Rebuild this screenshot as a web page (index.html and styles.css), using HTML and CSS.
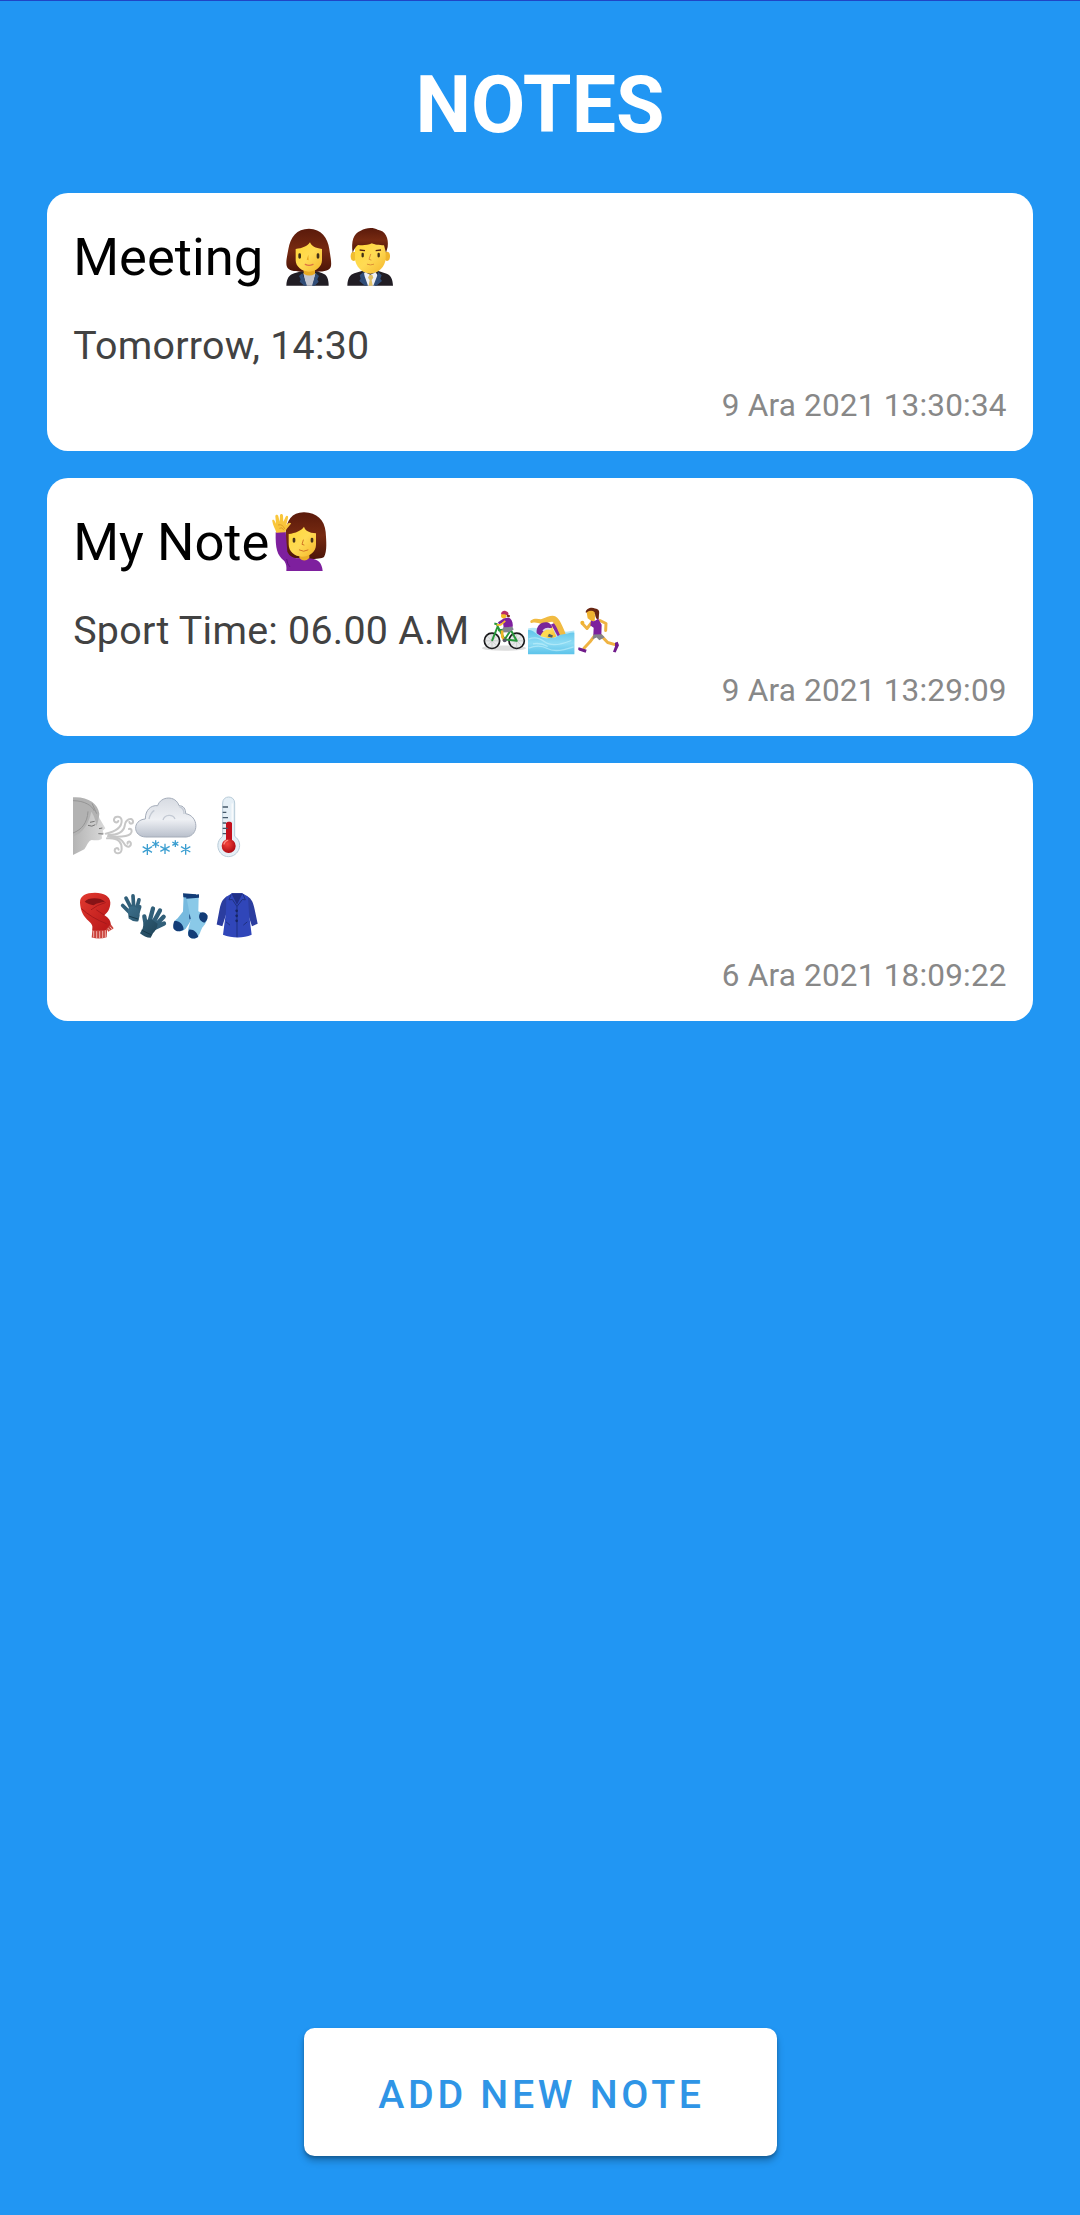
FILE: index.html
```html
<!DOCTYPE html>
<html lang="tr">
<head>
<meta charset="utf-8">
<title>Notes</title>
<link rel="stylesheet" href="styles.css">
</head>
<body>
<svg class="defs" aria-hidden="true">
  <defs>
    <linearGradient id="hair" x1="0" y1="0" x2="0" y2="1"><stop offset="0" stop-color="#5a1a0b"/><stop offset=".5" stop-color="#772a11"/><stop offset="1" stop-color="#4c1508"/></linearGradient>
    <linearGradient id="skin" x1="0" y1="0" x2="1" y2="1"><stop offset="0" stop-color="#ffd735"/><stop offset=".5" stop-color="#ffdb54"/><stop offset="1" stop-color="#f4b62c"/></linearGradient>
    <linearGradient id="cloud" x1="0" y1="0" x2="0" y2="1"><stop offset="0" stop-color="#d7dbe2"/><stop offset=".55" stop-color="#eef0f4"/><stop offset="1" stop-color="#b9c0cc"/></linearGradient>
    <linearGradient id="water" x1="0" y1="0" x2="0" y2="1"><stop offset="0" stop-color="#5fc4ea"/><stop offset=".55" stop-color="#8edcf4"/><stop offset="1" stop-color="#5cc3ea"/></linearGradient>
    <linearGradient id="red" x1="0" y1="0" x2="1" y2="1"><stop offset="0" stop-color="#e23a30"/><stop offset="1" stop-color="#b71618"/></linearGradient>
    <linearGradient id="glove" x1="0" y1="0" x2="1" y2="1"><stop offset="0" stop-color="#3c6f8b"/><stop offset="1" stop-color="#1f4357"/></linearGradient>
    <linearGradient id="grey" x1="0" y1="0" x2="1" y2="0"><stop offset="0" stop-color="#b4b4b4"/><stop offset="1" stop-color="#dadada"/></linearGradient>
    <radialGradient id="bulb" cx=".4" cy=".35" r=".7"><stop offset="0" stop-color="#f5443c"/><stop offset="1" stop-color="#a90710"/></radialGradient>
  </defs>
</svg>
<main class="screen">
  <h1 class="title">NOTES</h1>
  <section class="notes">
    <article class="note">
      <h2 class="note-title"><span>Meeting</span><span class="emojis spaced">
        <svg class="emoji" viewBox="23 11 186 230" role="img" aria-label="woman office worker">
          <path fill="#211d24" d="M48 211c1-21 8-33 24-37l21-6h47l16 6c14 4 19 18 19 37z"/>
          <path fill="url(#hair)" d="M116 40C79 40 60 66 54 102c-4 22-8 38-5 50 3 13 22 17 44 17h46c24 0 41-4 43-17 2-12-2-30-5-50C172 66 153 41 116 40z"/>
          <path fill="#c3c6d0" d="M99 174h37l-9 37h-20z"/>
          <path fill="#e9a921" d="M100 158h34v17q-17 11-34 0z"/>
          <path fill="url(#skin)" d="M76 101c21-2 34-8 43-20 4 11 16 18 36 20v34c0 19-18 34-39 34s-40-15-40-34z"/>
          <path fill="#304d78" d="M96 174l-10 8 5 10-3 7 14 12h8zM137 174l9 8-5 10 4 7-12 12h-8z"/>
          <path d="M88 118v8M143 118v8" stroke="#423017" stroke-width="8" stroke-linecap="round"/>
          <path fill="#e9a71d" d="M114 118l-5 15 6 2z"/>
          <path d="M105 147q11 6 23 0" fill="none" stroke="#dc7144" stroke-width="4" stroke-linecap="round"/>
        </svg>
        <svg class="emoji" viewBox="209 11 186 230" role="img" aria-label="man office worker">
          <path fill="#211d24" d="M231 211c1-21 7-33 21-37l25-8h45l27 9c14 5 18 18 19 36z"/>
          <ellipse cx="250" cy="123" rx="9" ry="14" fill="#f0bd31"/><ellipse cx="350" cy="123" rx="9" ry="14" fill="#efb52c"/>
          <path fill="url(#skin)" d="M254 82h92v46c0 26-23 47-46 47s-46-21-46-47z"/>
          <path fill="url(#hair)" d="M247 112c-5-34 2-58 24-66 17-11 40-10 51-3 23 3 34 25 30 52l-5 17-6-22c-14 0-30-2-36-6-15 6-27 7-42 5-8 6-11 13-16 23z"/>
          <path fill="#eef0f5" d="M284 171l16 7 16-7 8 12-10 28h-24l-15-29z"/>
          <path fill="#dfbf65" d="M297 179h9l3 8-5 7 3 17h-12l3-17-5-7z"/>
          <path fill="#304d78" d="M280 169l-12 11 3 10-4 7 17 14h9l-10-28zM323 169l11 11-4 10 5 7-17 14h-9l11-28z"/>
          <path d="M268 104l16 2M316 106l16-2" stroke="#592413" stroke-width="4"/>
          <path d="M277 116v7M325 116v7" stroke="#423017" stroke-width="7" stroke-linecap="round"/>
          <path d="M301 117l-5 15 6 2M291 147q9 4 19 0" fill="none" stroke="#dd9136" stroke-width="3" stroke-linecap="round"/>
        </svg>
      </span></h2>
      <p class="note-body">Tomorrow, 14:30</p>
      <time class="note-date">9 Ara 2021 13:30:34</time>
    </article>

    <article class="note">
      <h2 class="note-title"><span>My Note</span><span class="emojis">
        <svg class="emoji" viewBox="27 11 186 230" role="img" aria-label="woman raising hand">
          <path fill="url(#hair)" d="M133 36C96 35 79 61 77 98c-1 27-5 49-2 68 17 10 102 15 117 4 10-16 7-48 5-75-3-36-27-58-64-59z"/>
          <path fill="#7e209e" d="M47 96l30-2 5 60c7 14 16 18 32 20h34c27 2 38 14 40 38H79c1-13 0-20-6-30-22-17-27-37-26-86z"/>
          <path fill="#eaae29" d="M118 158h30v15q-15 15-30 0z"/>
          <path fill="url(#skin)" d="M86 101c21-3 38-10 46-22 4 12 14 18 36 20v34c0 20-18 36-42 36-23 0-40-16-40-37z"/>
          <path fill="#f9c63b" d="M49 97c-3-11-11-23-12-34-2-6 5-7 7-1l4 8-2-22c0-6 8-6 9 0l4 16 1-19c1-6 9-5 9 1l1 18 7-15c3-5 9-2 7 4l-5 20c6-6 12-8 14-4 1 3-15 15-17 27z"/>
          <path d="M54 74q14-4 20 12M58 84q8-6 14 6" fill="none" stroke="#d08b22" stroke-width="2"/>
          <path d="M102 116v7M156 116v7" stroke="#49351b" stroke-width="8" stroke-linecap="round"/>
          <path d="M130 119l-4 13 6 2M118 149q13 8 26 0" fill="none" stroke="#d17524" stroke-width="3" stroke-linecap="round"/>
          <path d="M80 176q2 17 10 24" fill="none" stroke="#5e147c" stroke-width="3"/>
        </svg>
      </span></h2>
      <p class="note-body"><span>Sport Time: 06.00 A.M</span><span class="emojis spaced">
        <svg class="emoji" viewBox="35 13.5 140 186" role="img" aria-label="woman biking">
          <ellipse cx="104" cy="158" rx="66" ry="8" fill="#ddd"/>
          <g fill="#e8eaea" stroke="#171719" stroke-width="5"><circle cx="68" cy="136" r="23"/><circle cx="142" cy="136" r="23"/></g>
          <path d="M68 113v46M45 136h46M52 120l32 32M84 120l-32 32M142 113v46M119 136h46M126 120l32 32M158 120l-32 32" stroke="#999" stroke-width="1"/>
          <path d="M68 136l17-43 21 39 20-31-40 3M106 132l36 4-18-33M85 93l-2-7-8-2" fill="none" stroke="#27963a" stroke-width="6" stroke-linejoin="round"/>
          <path fill="#82878f" d="M103 94l26-1 4 9-14 8-25 1z"/>
          <path d="M98 105l1 19 7 12" fill="none" stroke="#f0b526" stroke-width="8"/>
          <circle cx="103" cy="61" r="8" fill="#f5bd28"/>
          <path fill="#7e209e" d="M103 69l14-3c10 3 15 15 13 28l-27 1-2-13-12 4-3-6z"/>
          <path d="M108 76l-14 12h-12" fill="none" stroke="#f5bd28" stroke-width="5"/>
          <path fill="#ba2e66" d="M95 56c0-8 8-12 15-9 8 2 9 8 6 14l-10-5z"/>
          <path fill="#7b3016" d="M113 58l9 1-1 6-9-1z"/>
          <circle cx="106" cy="134" r="6" fill="#556"/>
        </svg>
        <svg class="emoji" viewBox="175 13.5 140 186" role="img" aria-label="woman swimming">
          <path fill="#b5e8f7" d="M175 99q17-5 34 2l82 8 23-4v70H175z"/>
          <path fill="#842aa0" d="M244 87l20-9 24 42-22 5z"/>
          <path fill="#f1bb42" d="M183 75c11-8 22-5 31-4 20-7 33-14 44-8 13 8 24 36 32 58l-17 4c-7-18-14-37-25-46-9 0-18 6-31 7-12-4-21-7-29-4-5 2-8-2-5-7z"/>
          <path fill="url(#skin)" d="M212 100l35-8 13 31-15 7-32-8z"/>
          <path fill="#79269a" d="M201 113c-2-19 10-33 27-33 12 0 18 8 20 17-19 0-26 8-36 24z"/>
          <path d="M220 106q11-10 23-5" fill="none" stroke="#ddd6ee" stroke-width="5"/>
          <path fill="#4d5f66" d="M238 115l12 5-3 7-13-4z"/>
          <path fill="url(#water)" d="M175 104c14-3 24 12 38 20 15 9 27 2 37 3 14 1 14-10 27-10 15 0 27-8 37-5v64H175z"/>
          <path d="M177 131q24-11 48 8t80-4M177 158q31-13 56 1t79-5M190 145q24-4 44 8" fill="none" stroke="#c7f2fb" stroke-width="4" opacity=".6"/>
        </svg>
        <svg class="emoji" viewBox="315 13.5 140 186" role="img" aria-label="woman running">
          <path fill="#682612" d="M347 51c0-13 19-18 28-12 12 1 14 9 12 18l-1 15c-8 0-10-8-11-17z"/>
          <path d="M390 75l18 9-1 21M365 81l-14 18-14-15M375 119l-15 20-18 19M393 120l20 21 25 7" fill="none" stroke="#efb342" stroke-width="9" stroke-linejoin="round" stroke-linecap="round"/>
          <path fill="#efb22f" d="M350 50q14-8 24 0l1 12-1 15h-9l-12-9z"/>
          <path fill="#7d219d" d="M363 75c8 5 16-1 21-6l11 19-1 33-24-2 1-22-10-7z"/>
          <path fill="#84838b" d="M371 117l24-1 9 9-16 9-8-8-13 5z"/>
          <path fill="#6f1b8a" d="M326 155l24 8-3 9-20-7q-5-3-1-10zM435 142l8-3 4 10-10 22-8-2 6-16z"/>
          <circle cx="337" cy="82" r="6" fill="#efb22f"/>
        </svg>
      </span></p>
      <time class="note-date">9 Ara 2021 13:29:09</time>
    </article>

    <article class="note">
      <h2 class="note-title"><span class="emojis">
        <svg class="emoji" viewBox="39 11 186 230" role="img" aria-label="wind face">
          <path fill="url(#grey)" d="M39 67l66-2c9 13 10 24 13 33l18 31-8 7 3 9-6 5 1 9c-4 8-20 6-31 5-10 2-15 19-22 28l-34 17z"/>
          <path fill="#b2b2b2" d="M39 36c43-3 75 18 79 49-2 19-5 29-9 37-3-20-7-31-15-43-8 36-25 64-55 75z"/>
          <path d="M39 46c34 0 58 15 64 31M84 78c-2 35-19 55-45 65M96 54l14 31" fill="none" stroke="#959595" stroke-width="3"/>
          <path d="M84 120q12 6 22-2M90 111l14-3M115 145l15 1M127 128l-10 2" fill="none" stroke="#747474" stroke-width="3"/>
          <g fill="none" stroke="#c7c7c7" stroke-width="6" stroke-linecap="round"><path d="M137 145c32-7 48-19 48-38 0-15-20-17-23-5-1 10 10 12 13 5"/><path d="M145 149c32 0 46-13 49-27 2-20 21-28 25-15 1 9-10 11-11 3"/><path d="M144 153c26 2 58 2 67-7 8-8 3-18-4-15"/><path d="M141 159c38-3 45 16 44 32-1 17-20 16-21 5 0-9 10-10 12-3M151 156c38 0 37 15 45 24 9 9 19 2 16-8-3-6-11-3-9 3"/></g>
        </svg>
        <svg class="emoji" viewBox="225 11 186 230" role="img" aria-label="cloud with snow">
          <path fill="url(#cloud)" stroke="#a4acb9" stroke-width="3" d="M257 155c-39-1-41-51-1-54 0-27 16-42 37-40 9-29 54-32 64 0 14 0 20 10 20 24 40 7 41 66 2 70z"/>
          <path d="M309 104c5-18 30-18 36-3M358 64q15 6 14 22M267 101q4-18 16-26" fill="none" stroke="#c4cad4" stroke-width="4"/>
          <g stroke="#3d9fd1" stroke-width="4"><path d="M262 176v33M248 184l28 17M276 184l-28 17M315 175v31M301 183l28 15M329 183l-28 15M377 176v32M363 184l28 16M391 184l-28 16M287 165v22M277 170l20 12M297 170l-20 12M346 165v20M337 170l18 10M355 170l-18 10"/></g>
        </svg>
        <svg class="emoji" viewBox="411 11 186 230" role="img" aria-label="thermometer">
          <path fill="#e5eff6" stroke="#b8cbd8" stroke-width="3" d="M488 53c0-24 36-24 36 0v100c29 20 12 61-19 61-30 0-44-41-17-61z"/>
          <path fill="#c4101c" d="M498 113c4-5 15-5 18 0v54h-18z"/>
          <circle cx="506" cy="182" r="21" fill="url(#bulb)"/>
          <path d="M488 65h16M488 81h11M488 97h16M488 113h10M488 129h15M488 145h10" stroke="#45596a" stroke-width="4"/>
          <path d="M492 176q3-10 11-11" fill="none" stroke="#ff8b80" stroke-width="4" stroke-linecap="round"/>
          <path d="M517 54v52" stroke="#fff" stroke-width="5" opacity=".7"/>
        </svg>
      </span></h2>
      <p class="note-body"><span class="emojis">
        <svg class="emoji" viewBox="39 13.5 140 186" role="img" aria-label="scarf">
          <path fill="#c9423b" d="M98 140h44l-2 30q-22 8-45 1zM136 136l13-9 12 16-16 11z"/>
          <path fill="url(#red)" d="M60 66c0-20 18-29 45-29s45 11 46 29c0 18-7 29-18 38 14 8 19 17 19 27l-16 18H97c3-14-4-22-16-32-14-15-20-31-21-51z"/>
          <path fill="#871316" d="M74 64c10-14 48-14 61 0-12 2-24 4-34 10-10-1-19-4-27-10z"/>
          <path d="M64 84q30 28 76 46M133 104l-24-16M137 66q-26 7-44 22" fill="none" stroke="#a7191b" stroke-width="3"/>
          <path d="M101 151v20M110 152v21M119 152v22M128 151v22M136 149v22M150 139l7 8M144 143l7 8" stroke="#f7c4bf" stroke-width="2.5"/>
        </svg>
        <svg class="emoji" viewBox="179 13.5 140 186" role="img" aria-label="gloves">
          <g fill="none" stroke="#315f79" stroke-linecap="round" stroke-linejoin="round">
            <path stroke-width="11" d="M207 95l-20-20M212 82l-15-29M220 78l-2-32M229 84l7-26M233 95l5-16"/>
            <path stroke-width="13" d="M256 132l-4-24M268 122l10-38M280 124l19-34M288 132l22-23M284 142l27-13"/>
          </g>
          <path fill="url(#glove)" d="M202 88q8-14 20-10l12 7q6 12 4 20l-4 17q-15 3-29-8zM250 128q12-16 24-12l18 14q-2 18-14 28l-7 14q-18-2-32-14l8-14z"/>
          <path d="M206 107l28 9M244 149l29 14" stroke="#173a4b" stroke-width="3"/>
        </svg>
        <svg class="emoji" viewBox="319 13.5 140 186" role="img" aria-label="socks">
          <path fill="#77badf" d="M369 41l36 6-1 50c-7 16-16 27-25 42-7 15-28 18-37 6-6-12-2-24 9-32l16-20z"/>
          <path fill="#123c77" d="M367 38l39 3v12l-38-3zM342 121c15 0 26 11 27 26-10 8-26 7-31-4-1-8 0-16 4-22zM398 92c-11 2-14 13-11 25l11-6z"/>
          <path fill="#8ac9e8" d="M377 49l37 2-1 41 26 12c2 20-8 30-14 37-7 13-8 29-22 33-16 1-21-8-21-17-1-14 7-27 8-42z"/>
          <path fill="#123c77" d="M376 46l39-5v11l-38 3zM419 97c9-5 19 1 22 9 1 11-4 16-10 21-15-5-20-18-12-30zM386 147c14-1 24 10 27 22-9 8-26 7-30-4-1-7-1-12 3-18z"/>
        </svg>
        <svg class="emoji" viewBox="459 13.5 140 186" role="img" aria-label="coat">
          <path fill="#2b3d9f" d="M502 47c-13 6-19 18-23 38l-9 47 17 5 16-50zM563 48c12 7 17 19 21 39l9 43-17 7-17-51z"/>
          <path fill="#3046b9" d="M516 38h31l17 10 3 50 8 65c-26 12-61 10-86 0l9-69 1-45z"/>
          <path fill="#1f2f88" d="M514 38h34l-17 35zM516 38l15 6 16-6v5l-16 7-14-7z"/>
          <path d="M513 43l-6 15 10-1 14 21 16-21 9 1-7-17M531 78v92M498 124l12 10M562 124l-12 10" fill="none" stroke="#1e307f" stroke-width="3"/>
          <g fill="#172564"><circle cx="530" cy="91" r="4"/><circle cx="530" cy="106" r="4"/><circle cx="530" cy="121" r="4"/></g>
        </svg>
      </span></p>
      <time class="note-date">6 Ara 2021 18:09:22</time>
    </article>
  </section>
  <button class="add" type="button">ADD NEW NOTE</button>
</main>
</body>
</html>
```
FILE: styles.css
```css
* { box-sizing: border-box; }
body { margin: 0; font-family: Roboto, sans-serif; background: #2196f3; }
.defs { position: absolute; width: 0; height: 0; }
.screen {
  display: flex;
  flex-direction: column;
  height: 2215px;
  padding: 0 47px 59px;
  border-top: 1px solid #1f45c5;
}
.title {
  margin: 51px 0 0;
  font-size: 78.75px;
  font-weight: 700;
  line-height: 106px;
  height: 140.6px;
  color: #fff;
  text-align: center;
}
.notes { display: flex; flex-direction: column; gap: 26.25px; }
.note {
  display: flex;
  flex-direction: column;
  height: 258.75px;
  padding: 26.25px 26.25px 0;
  border-radius: 21px;
  background: #fff;
}
.note-title, .note-body { display: flex; margin: 0; font-weight: 400; white-space: nowrap; }
.note-title { height: 76.7px; font-size: 52.5px; line-height: 76.7px; color: #000; }
.note-body { height: 62px; margin-top: 19px; font-size: 39.375px; line-height: 62px; letter-spacing: .25px; color: #424242; }
.note-date {
  margin-top: 10.8px;
  font-size: 31.5px;
  line-height: 37px;
  letter-spacing: .2px;
  color: #888;
  text-align: right;
}
.emojis { display: flex; }
.spaced { margin-left: 15px; }
.note-body .spaced { margin-left: 12px; }
.note-title .emoji { width: 62px; height: 76.67px; }
.note-body .emoji { width: 46.67px; height: 62px; }
.add {
  align-self: center;
  width: 473px;
  height: 128px;
  margin-top: auto;
  padding: 5px 0 0 3px;
  border: 0;
  border-radius: 10.5px;
  background: #fff;
  color: #2f95e6;
  font: 500 39.375px/1 Roboto, sans-serif;
  letter-spacing: 3.7px;
  box-shadow: 0 5px 7px rgba(0, 0, 0, .26), 0 2px 3px rgba(0, 0, 0, .18);
}
```
